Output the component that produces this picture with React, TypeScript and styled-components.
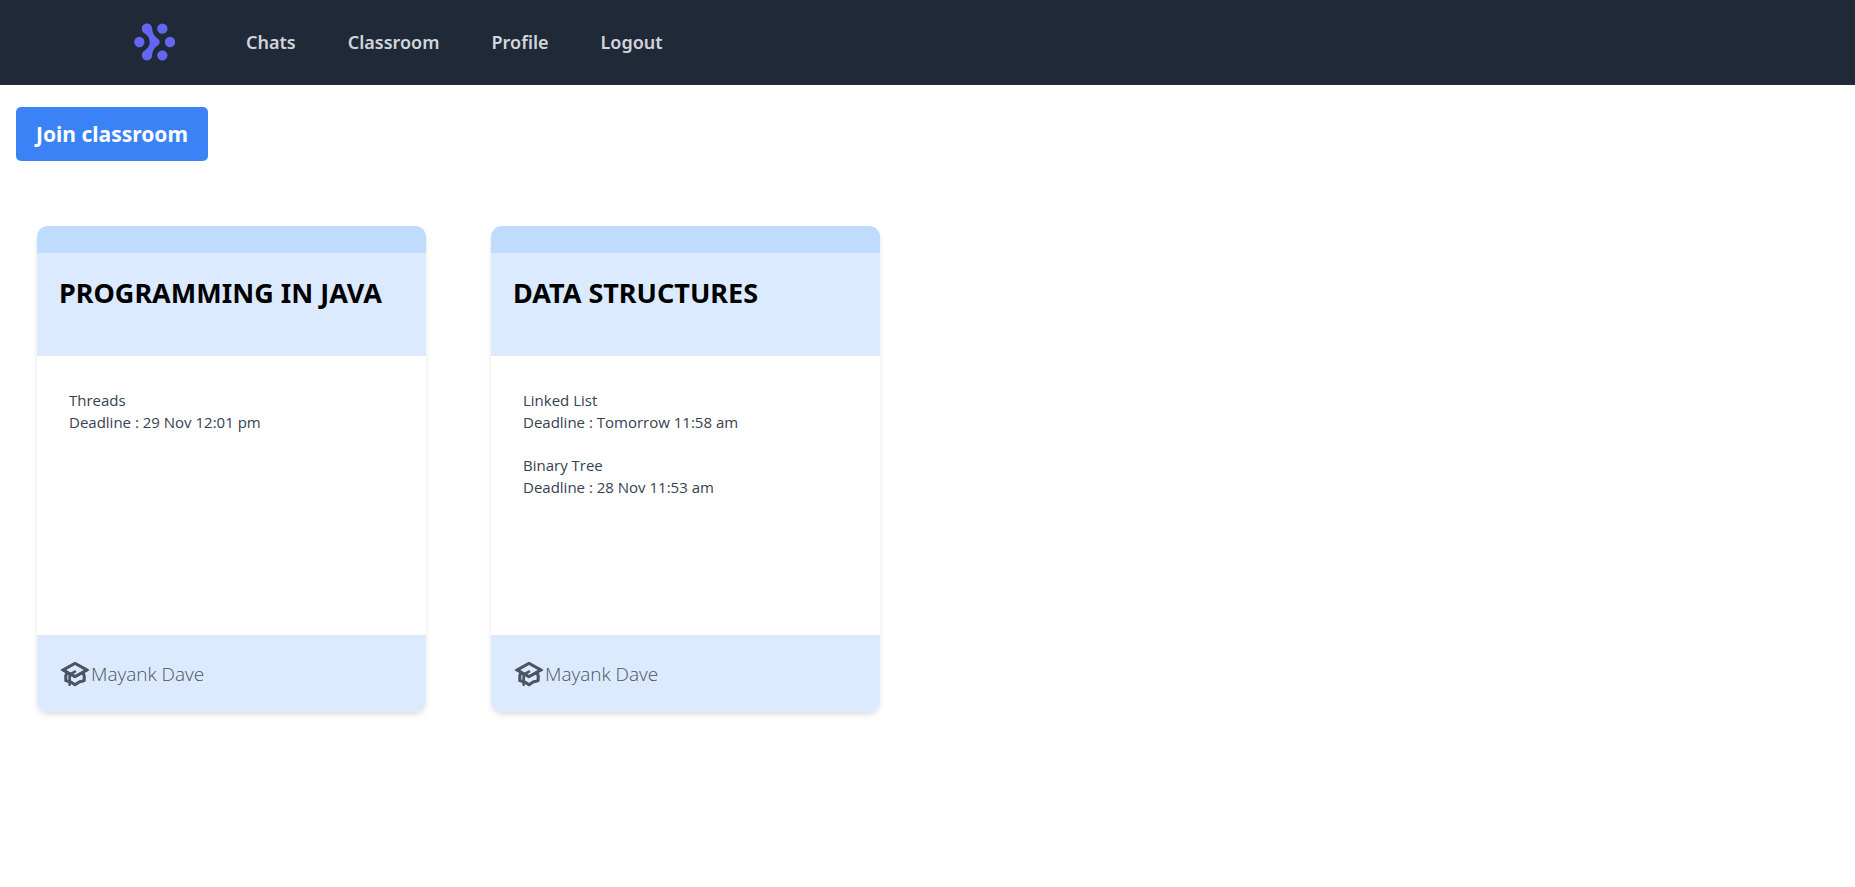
import React from "react";
import styled, { createGlobalStyle } from "styled-components";
import { HiOutlineAcademicCap } from "react-icons/hi";

const GlobalStyle = createGlobalStyle`
  *, *::before, *::after { box-sizing: border-box; }
  body {
    margin: 0;
    background: #ffffff;
    font-family: "Segoe UI", "Noto Sans", "Open Sans", sans-serif;
    color: #000000;
  }
  h2, p, ul { margin: 0; padding: 0; }
  ul { list-style: none; }
`;

const NavBar = styled.nav`
  display: flex;
  align-items: center;
  gap: 71px;
  min-height: 85px;
  padding: 0 134px 2px;
  background: #1f2937;
`;

const LogoLink = styled.a`
  display: flex;
  color: #6366f1;
`;

const NavLinks = styled.ul`
  display: flex;
  gap: 52px;
`;

const NavLink = styled.a`
  font-size: 18px;
  font-weight: 600;
  line-height: 26px;
  color: #d1d5db;
  text-decoration: none;
`;

const Page = styled.main`
  display: flex;
  flex-direction: column;
  align-items: flex-start;
  gap: 65px;
  padding: 22px 16px;
`;

const JoinButton = styled.button`
  padding: 12px 20px;
  border: 0;
  border-radius: 5px;
  background: #3b82f6;
  color: #ffffff;
  font-family: inherit;
  font-size: 21px;
  font-weight: 700;
  line-height: 30px;
  cursor: pointer;
`;

const CardGrid = styled.section`
  display: flex;
  flex-wrap: wrap;
  gap: 65px;
  padding: 0 21px;
`;

const Card = styled.article`
  display: flex;
  flex-direction: column;
  width: 389px;
  border-radius: 11px;
  overflow: hidden;
  background: #ffffff;
  box-shadow: 0 4px 7px -1px rgba(0, 0, 0, 0.1), 0 2px 4px -1px rgba(0, 0, 0, 0.06);
`;

const CardStripe = styled.div`
  height: 27px;
  background: #bfdbfe;
`;

const CardHeader = styled.header`
  min-height: 103px;
  padding: 22px;
  background: #dbeafe;
  border-bottom: 1px solid #e5e7eb;
`;

const CardTitle = styled.h2`
  font-size: 27px;
  font-weight: 700;
  line-height: 36px;
`;

const TaskList = styled.ul`
  display: flex;
  flex-direction: column;
  gap: 21px;
  min-height: 279px;
  padding: 33px 32px;
`;

const Task = styled.li`
  font-family: "Segoe UI", "Open Sans", sans-serif;
  font-size: 15px;
  line-height: 22px;
  color: #374151;
`;

const CardFooter = styled.footer`
  display: flex;
  align-items: center;
  min-height: 77px;
  padding: 0 22px;
  background: #dbeafe;
  border-top: 1px solid #e5e7eb;
  color: #4b5563;
`;

const Teacher = styled.span`
  font-family: "Segoe UI", "Open Sans", sans-serif;
  font-size: 19px;
  font-weight: 300;
  line-height: 30px;
`;

const Logo = () => (
  <svg width="41" height="38" viewBox="0 0 123 114" fill="currentColor" role="img" aria-label="Home">
    <circle cx="16" cy="57" r="15.5" />
    <circle cx="85" cy="17" r="15.5" />
    <circle cx="85" cy="97" r="15.5" />
    <circle cx="108" cy="57" r="15.5" />
    <path d="M39 1.500C48 1.500 54 8 54.500 17C55 28 60 37 68 44C73 48 77 50 77 57C77 64 73 66 68 70C60 77 55 86 54.500 97C54 106 48 112.500 39 112.500C30 112.500 23.500 106 23.500 97C23.500 91 26 87 31 83C40 77 47 70 47 57C47 44 40 37 31 31C26 27 23.500 23 23.500 17C23.500 8 30 1.500 39 1.500Z" />
  </svg>
);

const links = ["Chats", "Classroom", "Profile", "Logout"];

const classrooms = [
  {
    title: "PROGRAMMING IN JAVA",
    teacher: "Mayank Dave",
    tasks: [{ name: "Threads", deadline: "29 Nov 12:01 pm" }],
  },
  {
    title: "DATA STRUCTURES",
    teacher: "Mayank Dave",
    tasks: [
      { name: "Linked List", deadline: "Tomorrow 11:58 am" },
      { name: "Binary Tree", deadline: "28 Nov 11:53 am" },
    ],
  },
];

export default function App() {
  return (
    <>
      <GlobalStyle />
      <NavBar>
        <LogoLink href="#home">
          <Logo />
        </LogoLink>
        <NavLinks>
          {links.map((label) => (
            <li key={label}>
              <NavLink href={`#${label.toLowerCase()}`}>{label}</NavLink>
            </li>
          ))}
        </NavLinks>
      </NavBar>
      <Page>
        <JoinButton type="button">Join classroom</JoinButton>
        <CardGrid>
          {classrooms.map((room) => (
            <Card key={room.title}>
              <CardStripe />
              <CardHeader>
                <CardTitle>{room.title}</CardTitle>
              </CardHeader>
              <TaskList>
                {room.tasks.map((task) => (
                  <Task key={task.name}>
                    <p>{task.name}</p>
                    <p>Deadline : {task.deadline}</p>
                  </Task>
                ))}
              </TaskList>
              <CardFooter>
                <HiOutlineAcademicCap size={32} aria-hidden="true" />
                <Teacher>{room.teacher}</Teacher>
              </CardFooter>
            </Card>
          ))}
        </CardGrid>
      </Page>
    </>
  );
}
